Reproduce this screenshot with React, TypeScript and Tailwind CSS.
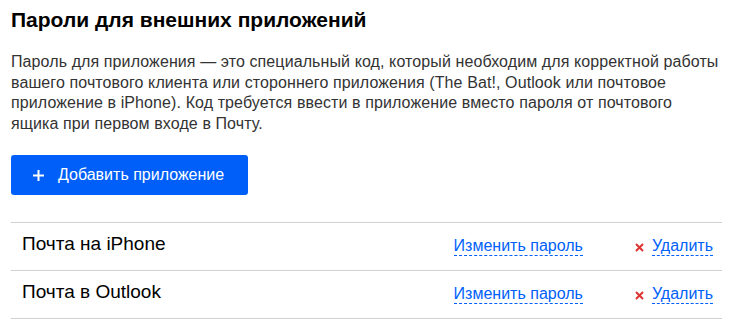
const apps = ['Почта на iPhone', 'Почта в Outlook'];

function App() {
  return (
    <div className="min-h-screen bg-white font-['Liberation_Sans',Arial,sans-serif] text-[#000]">
      <div className="w-[711px] ml-[11px] pt-[7px]">
        <h1 className="text-[21px] leading-[26px] font-bold text-black">Пароли для внешних приложений</h1>

        <p className="mt-[19px] text-[16px] tracking-[0.1px] leading-[20.7px] text-[#333]">
          Пароль для приложения — это специальный код, который необходим для корректной работы вашего
          почтового клиента или стороннего приложения (The Bat!, Outlook или почтовое приложение в
          iPhone). Код требуется ввести в приложение вместо пароля от почтового ящика при первом входе
          в Почту.
        </p>

        <button className="mt-[20px] h-[40px] w-[237px] rounded-[3px] bg-[#005ff9] text-white text-[16px] flex items-center pl-[22px] gap-[14px]">
          <svg width="11" height="11" viewBox="0 0 11 11" className="mt-[2px]">
            <path d="M5.5 0v11M0 5.5h11" stroke="white" strokeWidth="2" />
          </svg>
          <span>Добавить приложение</span>
        </button>

        <div className="mt-[27px] border-t border-[#d0d0d0]">
          {apps.map((name) => (
            <div key={name} className="h-[48px] border-b border-[#d0d0d0] flex items-center pl-[11px]">
              <span className="flex-1 text-[19px] leading-[22px] text-black -mt-[4px]">{name}</span>
              <a className="text-[16px] text-[#005ff9] border-b border-dashed border-[#005ff9] leading-[18px] mr-[52px]">
                Изменить пароль
              </a>
              <svg width="9" height="9" viewBox="0 0 9 9" className="mr-[8px] mt-[2px]">
                <path d="M1 1l7 7M8 1l-7 7" stroke="#d33" strokeWidth="2" />
              </svg>
              <a className="text-[16px] text-[#005ff9] border-b border-dashed border-[#005ff9] leading-[18px] mr-[9px]">
                Удалить
              </a>
            </div>
          ))}
        </div>
      </div>
    </div>
  );
}

export default App;
